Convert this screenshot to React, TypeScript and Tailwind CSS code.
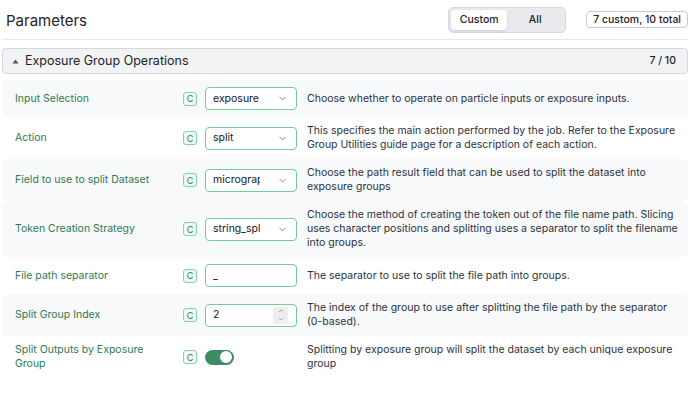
import { ChevronDown, ChevronUp } from 'lucide-react';

type Control =
  | { kind: 'select'; value: string }
  | { kind: 'text'; value: string }
  | { kind: 'number'; value: string }
  | { kind: 'toggle'; on: boolean };

interface Param {
  label: string;
  control: Control;
  description: string;
  shaded: boolean;
}

const PARAMS: Param[] = [
  {
    label: 'Input Selection',
    control: { kind: 'select', value: 'exposure' },
    description: 'Choose whether to operate on particle inputs or exposure inputs.',
    shaded: true,
  },
  {
    label: 'Action',
    control: { kind: 'select', value: 'split' },
    description:
      'This specifies the main action performed by the job. Refer to the Exposure Group Utilities guide page for a description of each action.',
    shaded: false,
  },
  {
    label: 'Field to use to split Dataset',
    control: { kind: 'select', value: 'micrograph_blob' },
    description: 'Choose the path result field that can be used to split the dataset into exposure groups',
    shaded: true,
  },
  {
    label: 'Token Creation Strategy',
    control: { kind: 'select', value: 'string_split' },
    description:
      'Choose the method of creating the token out of the file name path. Slicing uses character positions and splitting uses a separator to split the filename into groups.',
    shaded: true,
  },
  {
    label: 'File path separator',
    control: { kind: 'text', value: '_' },
    description: 'The separator to use to split the file path into groups.',
    shaded: false,
  },
  {
    label: 'Split Group Index',
    control: { kind: 'number', value: '2' },
    description: 'The index of the group to use after splitting the file path by the separator (0-based).',
    shaded: true,
  },
  {
    label: 'Split Outputs by Exposure Group',
    control: { kind: 'toggle', on: true },
    description: 'Splitting by exposure group will split the dataset by each unique exposure group',
    shaded: false,
  },
];

function ControlField({ control }: { control: Control }) {
  if (control.kind === 'toggle') {
    return (
      <div className="flex h-[23px] items-center">
        <div className="flex h-[15px] w-[29px] items-center justify-end rounded-full bg-[#3f8c63] px-[2px]">
          <div className="h-[12px] w-[12px] rounded-full bg-white" />
        </div>
      </div>
    );
  }
  return (
    <div className="flex h-[23px] w-[92px] items-center overflow-hidden rounded-[4px] border-[1.5px] border-[#74cc9c] bg-white pl-[7px] pr-[8px]">
      <span
        className={`overflow-hidden whitespace-nowrap text-[10.5px] text-[#111827] ${control.kind === 'select' ? 'w-[47px]' : 'flex-1'}`}
      >
        {control.value}
      </span>
      {control.kind === 'select' && <ChevronDown size={11} strokeWidth={1.5} className="ml-auto shrink-0 text-[#4b5563]" />}
      {control.kind === 'number' && (
        <div className="flex h-[17px] w-[15px] shrink-0 flex-col items-center justify-center bg-[#eceef1] text-[#6b7280]">
          <ChevronUp size={8} strokeWidth={1.6} />
          <ChevronDown size={8} strokeWidth={1.6} />
        </div>
      )}
    </div>
  );
}

function ParamRow({ param }: { param: Param }) {
  return (
    <div
      className={`flex items-center rounded-[6px] py-[7px] pl-[13px] pr-2 ${param.shaded ? 'bg-[#f8f9fb]' : 'bg-white'}`}
    >
      <div className="w-[158px] shrink-0 pr-4 text-[10.5px] leading-[14px] text-[#2f7a55]">{param.label}</div>
      <div className="ml-[10px] flex h-[14px] w-[14px] shrink-0 items-center justify-center rounded-[3px] border border-[#80d4a6] bg-[#effbf4] text-[9px] leading-none text-[#2f7a55]">
        C
      </div>
      <div className="ml-2 w-[92px] shrink-0">
        <ControlField control={param.control} />
      </div>
      <p className="ml-[10px] flex-1 text-[10.5px] leading-[14px] text-[#2b3240]">{param.description}</p>
    </div>
  );
}

export default function App() {
  return (
    <div className="h-[395px] w-[690px] bg-white px-[2px] font-['Inter',sans-serif] text-[#111827]">
      <header className="flex h-[40px] items-center border-b border-[#e5e7eb] pl-1">
        <h1 className="mt-[3px] flex-1 text-[15px] font-normal text-[#1f2329]">Parameters</h1>
        <div className="flex h-[26px] items-center rounded-[5px] border border-[#d5d8dd] bg-[#e8eaed] p-[2px]">
          <button className="h-[20px] w-[56px] rounded-[4px] bg-white text-[10.5px] font-medium text-[#1f2329] shadow-sm">
            Custom
          </button>
          <button className="h-[20px] w-[56px] text-[10.5px] font-medium text-[#1f2329]">All</button>
        </div>
        <span className="ml-[20px] flex h-[17px] items-center rounded-[4px] border border-[#c7cbd1] px-[6px] text-[10.5px] font-medium text-[#1f2329]">
          7 custom, 10 total
        </span>
      </header>

      <div className="mt-2 flex h-[26px] items-center rounded-[4px] border border-[#d4d7dc] bg-[#f2f3f5] pl-[9px] pr-[11px]">
        <svg width="7" height="5" viewBox="0 0 7 5" className="text-[#4b5563]">
          <path d="M3.5 0.5 L6.5 4.5 L0.5 4.5 Z" fill="currentColor" />
        </svg>
        <span className="ml-[6px] flex-1 text-[12.5px] text-[#1f2329]">Exposure Group Operations</span>
        <span className="text-[10.5px] font-medium text-[#1f2329]">7 / 10</span>
      </div>

      <div className="mt-[6px] flex flex-col">
        {PARAMS.map((p) => (
          <ParamRow key={p.label} param={p} />
        ))}
      </div>
    </div>
  );
}
